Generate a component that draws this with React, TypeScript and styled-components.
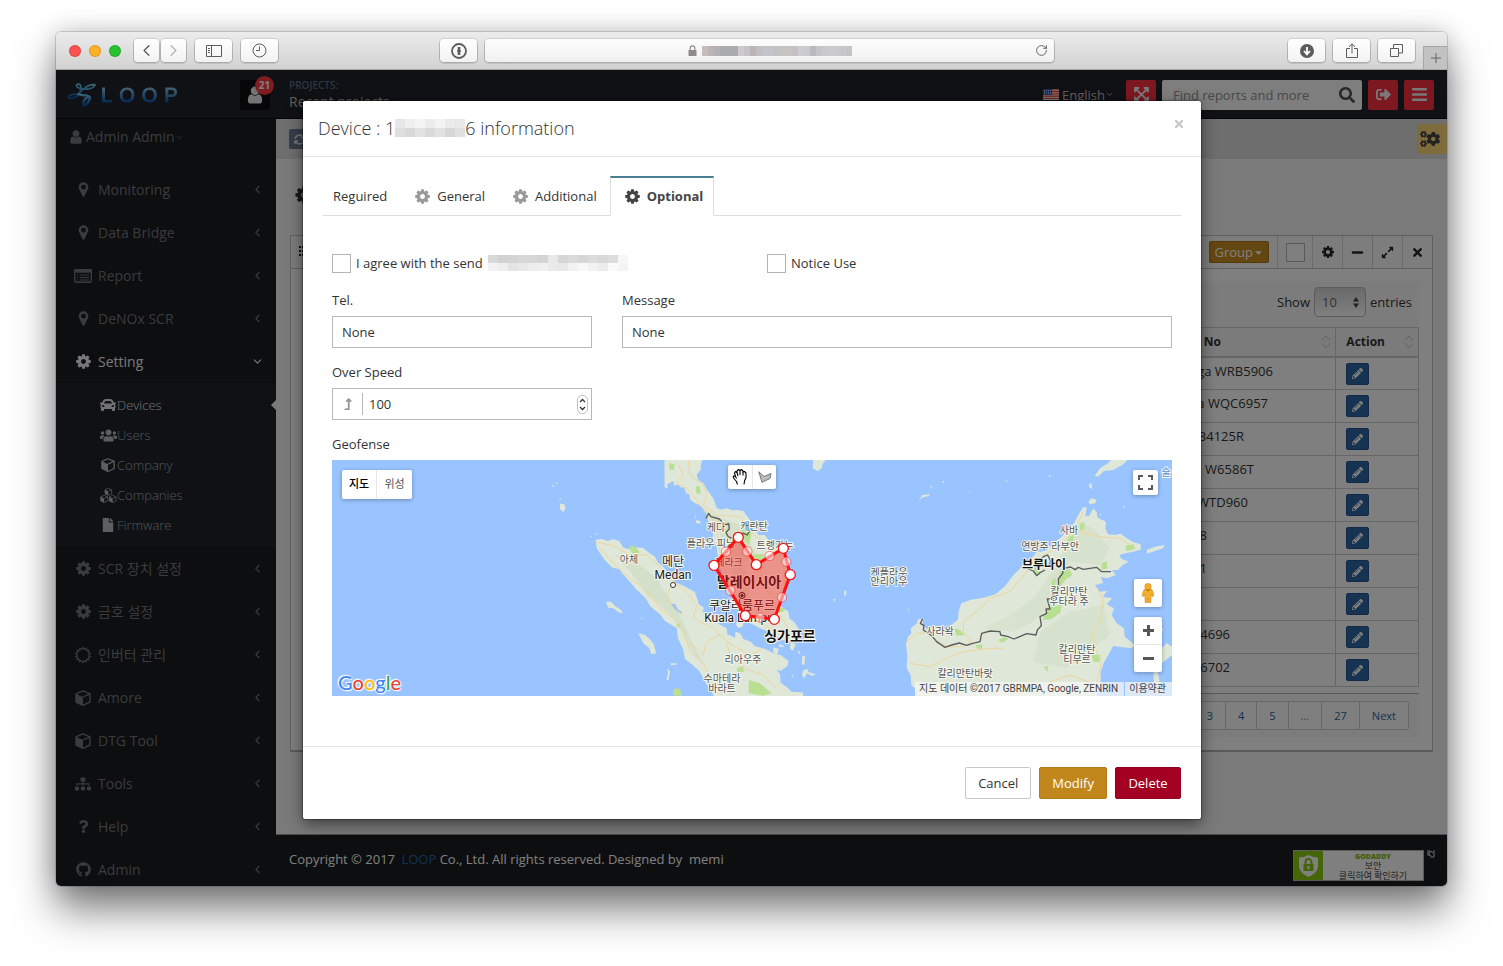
import React from "react";
import styled, { createGlobalStyle, css } from "styled-components";
import {
  FaBars, FaCar, FaCaretDown, FaCogs, FaExpandAlt, FaExpandArrowsAlt, FaFile, FaGithub,
  FaLevelUpAlt, FaMinus, FaPencilAlt, FaQuestion, FaSearch, FaSignOutAlt, FaSitemap,
  FaSyncAlt, FaTimes, FaUsers,
} from "react-icons/fa";
import { ChevronDown, ChevronLeft, ChevronRight, Clock3, Plus, RotateCw } from "lucide-react";

const GlobalStyle = createGlobalStyle`
  *, *::before, *::after { box-sizing: border-box; }
  body { margin: 0; background: #fff; font: 13px/20px "Open Sans", "Noto Sans CJK KR", sans-serif; color: #333; }
  button, input, select { font: inherit; color: inherit; margin: 0; }
  button { padding: 0; border: 0; background: none; cursor: pointer; }
  a { color: inherit; text-decoration: none; }
`;

/* ---------- icons ---------- */

const paths = {
  cog: "M1152 896q0-106-75-181t-181-75-181 75-75 181 75 181 181 75 181-75 75-181zm512-109v222q0 12-8 23t-20 13l-185 28q-19 54-39 91 35 50 107 138 10 12 10 25t-9 23q-27 37-99 108t-94 71q-12 0-26-9l-138-108q-44 23-91 38-16 136-29 186-7 28-36 28h-222q-14 0-24.5-8.5t-11.5-21.5l-28-184q-49-16-90-37l-141 107q-10 9-25 9-14 0-25-11-126-114-165-168-7-10-7-23 0-12 8-23 15-21 51-66.5t54-70.5q-27-50-41-99l-183-27q-13-2-21-12.5t-8-23.5v-222q0-12 8-23t19-13l186-28q14-46 39-92-40-57-107-138-10-12-10-24 0-10 9-23 26-36 98.5-107.5t94.5-71.5q13 0 26 10l138 107q44-23 91-38 16-136 29-186 7-28 36-28h222q14 0 24.5 8.5t11.5 21.5l28 184q49 16 90 37l142-107q9-9 24-9 13 0 25 10 129 119 165 170 7 8 7 22 0 12-8 23-15 21-51 66.5t-54 70.5q26 50 41 98l183 28q13 2 21 12.5t8 23.5z",
  marker: "M1152 640q0-106-75-181t-181-75-181 75-75 181 75 181 181 75 181-75 75-181zm256 0q0 109-33 179l-364 774q-16 33-47.5 52t-67.5 19-67.5-19-46.5-52l-365-774q-33-70-33-179 0-212 150-362t362-150 362 150 150 362z",
  user: "M1536 1399q0 109-62.5 187t-150.5 78h-854q-88 0-150.5-78t-62.5-187q0-85 8.5-160.5t31.5-152 58.5-131 94-89 134.5-34.5q131 128 313 128t313-128q76 0 134.5 34.5t94 89 58.5 131 31.5 152 8.5 160.5zm-256-887q0 159-112.5 271.5t-271.5 112.5-271.5-112.5-112.5-271.5 112.5-271.5 271.5-112.5 271.5 112.5 112.5 271.5z",
};

const Glyph = ({ name, size }: { name: keyof typeof paths; size: number }) => (
  <svg width={size} height={size} viewBox="0 0 1792 1792" fill="currentColor" aria-hidden="true">
    <path d={paths[name]} />
  </svg>
);

const ReportIcon = () => (
  <svg width="18" height="14" viewBox="0 0 18 14" aria-hidden="true">
    <rect x="0.7" y="0.7" width="16.6" height="12.6" rx="1.5" fill="none" stroke="currentColor" strokeWidth="1.4" />
    <path d="M0 3.8V1.5Q0 0 1.5 0h15Q18 0 18 1.500v2.300z" fill="currentColor" />
    <path d="M3 6h1M5.500 6H15M3 8.500h1M5.500 8.500H15M3 11h1M5.500 11H15" stroke="currentColor" strokeWidth="1" />
  </svg>
);

const SunIcon = () => {
  const teeth = Array.from({ length: 14 }, (_, i) => {
    const at = (a: number, r: number) => `${9 + r * Math.sin(a)} ${9 - r * Math.cos(a)}`;
    const a = (i * Math.PI) / 7;
    return `M${at(a - 0.17, 6.8)}L${at(a, 8.7)}L${at(a + 0.17, 6.8)}z`;
  }).join("");
  return (
    <svg width="18" height="18" viewBox="0 0 18 18" aria-hidden="true">
      <circle cx="9" cy="9" r="6.3" fill="none" stroke="currentColor" strokeWidth="1.300" />
      <path d={teeth} fill="currentColor" />
    </svg>
  );
};

const cubeShape = (
  <>
    <path d="M8 0.800 15 3.800V12L8 15.400 1 12V3.800z" fill="none" stroke="currentColor" strokeWidth="1.400" strokeLinejoin="round" />
    <path d="M1 3.800 8 7v8.400L1 12z" fill="currentColor" />
    <path d="M8 7l7-3.200" stroke="currentColor" strokeWidth="1.300" />
  </>
);
const CubeIcon = ({ size = 16 }: { size?: number }) => (
  <svg width={size} height={size} viewBox="0 0 16 16" aria-hidden="true">{cubeShape}</svg>
);
const CubesIcon = () => (
  <svg width="17" height="15" viewBox="0 0 34 30" aria-hidden="true">
    <g transform="translate(9 0) scale(0.95)">{cubeShape}</g>
    <g transform="translate(0.500 14) scale(0.980)">{cubeShape}</g>
    <g transform="translate(17.500 14) scale(0.980)">{cubeShape}</g>
  </svg>
);

const LoopMark = () => (
  <svg width="29" height="25" viewBox="0 0 87 75" fill="none" aria-hidden="true">
    <defs>
      <linearGradient id="mark" x1="0" y1="0" x2="0" y2="1">
        <stop offset="0" stopColor="#70ccec" />
        <stop offset="1" stopColor="#0a50b0" />
      </linearGradient>
    </defs>
    <g stroke="url(#mark)" strokeWidth="5" strokeLinecap="round" strokeLinejoin="round">
      <path d="M36 36C46 22 60 6 84 8C80 20 62 24 42 20C28 18 24 9 34 6C46 7 42 24 36 36C28 48 12 51 4 47C6 37 20 35 34 38" />
      <path d="M34 36C44 43 66 37 69 46C69 56 59 69 51 70C45 61 52 50 62 46" strokeWidth="7" />
    </g>
  </svg>
);

const LockIcon = () => (
  <svg width="9" height="11" viewBox="0 0 9 11" aria-hidden="true">
    <rect x="0.500" y="5" width="8" height="6" rx="0.600" fill="#8c8c8c" />
    <path d="M2.200 5V3.200a2.300 2.300 0 0 1 4.600 0V5" fill="none" stroke="#8c8c8c" strokeWidth="1.200" />
  </svg>
);

const FlagIcon = () => (
  <svg width="16" height="11" viewBox="0 0 16 11" aria-hidden="true">
    <rect width="16" height="11" fill="#fff" />
    <path d="M0 .8h16M0 2.500h16M0 4.200h16M0 6h16M0 7.700h16M0 9.500h16" stroke="#e8423a" strokeWidth="1" />
    <rect width="9" height="6" fill="#2c57c8" />
    <path d="M1 1.500h7M1 3.200h7M1 4.800h7" stroke="#fff" strokeWidth=".7" strokeDasharray="1 1" />
  </svg>
);

const Mosaic = ({ cols, cell, rows, height }: { cols: number; cell: number; rows: string[][]; height: number }) => (
  <svg width={cols * cell} height={height} aria-hidden="true">
    {rows.map((row, y) =>
      row.map((fill, x) => (
        <rect key={`${y}-${x}`} x={x * cell} y={(y * height) / rows.length} width={cell} height={height / rows.length} fill={fill} />
      ))
    )}
  </svg>
);

/* ---------- browser window ---------- */

const Desktop = styled.div`
  min-height: 100vh;
  padding: 32px 56px 80px;
  overflow: hidden;
`;
const Window = styled.div`
  display: flex;
  flex-direction: column;
  height: calc(100vh - 112px);
  min-height: 800px;
  border-radius: 5px;
  overflow: hidden;
  box-shadow: 0 0 0 1px rgba(0, 0, 0, 0.14), 0 0 24px rgba(0, 0, 0, 0.2), 0 24px 40px rgba(0, 0, 0, 0.5);
`;
const Chrome = styled.header`
  display: flex;
  align-items: center;
  height: 38px;
  flex: none;
  padding-left: 13px;
  background: linear-gradient(#ebebeb, #d2d2d2);
  border-bottom: 1px solid #a8a8a8;
  color: #636363;
`;
const Lights = styled.div`
  display: flex;
  gap: 8px;
  margin-right: 13px;
`;
const Light = styled.span<{ $color: string }>`
  width: 12px;
  height: 12px;
  border-radius: 50%;
  background: ${(p) => p.$color};
  box-shadow: inset 0 0 0 1px rgba(0, 0, 0, 0.12);
`;
const ChromeButton = styled.button<{ $narrow?: boolean; $muted?: boolean }>`
  display: flex;
  align-items: center;
  justify-content: center;
  width: ${(p) => (p.$narrow ? 25 : 37)}px;
  height: 23px;
  border-radius: 4px;
  background: linear-gradient(#fff, #f2f2f2);
  box-shadow: 0 0 0 1px rgba(0, 0, 0, 0.1), 0 1px 0 1px rgba(0, 0, 0, 0.1);
  color: ${(p) => (p.$muted ? "#b4b4b4" : "#5c5c5c")};
`;
const ChromeGroup = styled.div<{ $gap: number }>`
  display: flex;
  gap: ${(p) => p.$gap}px;
`;
const AddressGroup = styled.div`
  display: flex;
  flex: 1;
  gap: 8px;
  margin: 0 234px 0 162px;
`;
const Address = styled.div`
  display: flex;
  flex: 1;
  align-items: center;
  justify-content: center;
  gap: 4px;
  height: 23px;
  padding: 0 6px 0 23px;
  border-radius: 4px;
  background: linear-gradient(#fdfdfd, #f0f0f0);
  box-shadow: 0 0 0 1px rgba(0, 0, 0, 0.1), 0 1px 0 1px rgba(0, 0, 0, 0.1);
`;
const AddressText = styled.div`
  display: flex;
  flex: 1;
  align-items: center;
  justify-content: center;
  gap: 5px;
  color: #999;
`;
const NewTab = styled.button`
  align-self: flex-end;
  display: flex;
  align-items: center;
  justify-content: center;
  width: 24px;
  height: 23px;
  margin-left: 8px;
  border: 1px solid #a5a5a5;
  border-width: 1px 0 0 1px;
  background: #c2c2c2;
`;

/* ---------- application ---------- */

const AppArea = styled.div`
  position: relative;
  display: flex;
  flex-direction: column;
  flex: 1;
  min-height: 0;
  background: #f4f4f4;
`;
const TopBar = styled.div`
  display: flex;
  align-items: center;
  height: 49px;
  flex: none;
  padding: 1px 13px 0 0;
  background: #20222a;
  border-bottom: 1px solid #0c0d10;
  color: #c0bbb7;
`;
const Brand = styled.div`
  display: flex;
  align-items: center;
  width: 220px;
  padding: 0 6px 0 11px;
`;
const BrandName = styled.div`
  display: flex;
  gap: 7px;
  flex: 1;
  margin-left: 5px;
  font: 20px/24px "Liberation Sans", Arial, sans-serif;
  span {
    background: linear-gradient(#8cc8e8 20%, #0a58b0 80%);
    background-clip: text;
    color: transparent;
    -webkit-text-stroke: 1px transparent;
  }
`;
const Activity = styled.button`
  position: relative;
  display: flex;
  align-items: center;
  justify-content: center;
  width: 30px;
  height: 30px;
  border-radius: 2px;
  background: #0e0f12;
  color: #e8e8e8;
`;
const Badge = styled.span`
  position: absolute;
  top: -4px;
  right: -4px;
  width: 19px;
  height: 19px;
  border-radius: 50%;
  background: #ff3844;
  color: #fff;
  font: bold 10px/19px "Open Sans", sans-serif;
`;
const Projects = styled.div`
  flex: 1;
  margin-left: 13px;
  font-size: 14px;
  line-height: 20px;
`;
const ProjectsLabel = styled.div`
  font-size: 10px;
  font-weight: 600;
  line-height: 14px;
  color: #5a6c82;
`;
const InlineButton = styled.button`
  display: flex;
  align-items: center;
`;
const TopTools = styled.div`
  display: flex;
  align-items: center;
  gap: 6px;
`;
const Language = styled.button`
  display: flex;
  align-items: center;
  gap: 3px;
  margin-right: 6px;
  span { display: flex; align-items: center; }
`;
const RedButton = styled.button`
  display: flex;
  align-items: center;
  justify-content: center;
  width: 30px;
  height: 30px;
  border-radius: 2px;
  background: #fa3040;
  color: #f4f0f0;
  font-size: 15px;
`;
const Search = styled.label`
  display: flex;
  align-items: center;
  width: 200px;
  height: 30px;
  padding: 0 7px 0 11px;
  border-radius: 2px;
  background: #fdfdfd;
  color: #505050;
  input {
    flex: 1;
    min-width: 0;
    padding: 0;
    border: 0;
    outline: 0;
    background: none;
  }
  input::placeholder { color: #909090; opacity: 1; }
`;

const Body = styled.div`
  display: flex;
  flex: 1;
  min-height: 0;
`;
const Sidebar = styled.aside`
  width: 220px;
  flex: none;
  overflow: hidden;
  background: #1a1c1e;
  color: #74767f;
  font-size: 14px;
`;
const UserLink = styled.button`
  display: flex;
  align-items: center;
  gap: 2px;
  height: 36px;
  margin: 0 0 13px 12px;
`;
const UserName = styled.span`
  display: flex;
  align-items: center;
`;
const MenuLink = styled.a<{ $active?: boolean }>`
  display: grid;
  grid-template-columns: 28px 1fr 14px;
  align-items: center;
  height: 43px;
  padding: 0 11px 0 13px;
  color: ${(p) => (p.$active ? "#f0f0f0" : "inherit")};
  column-gap: 1px;
  > :first-child { justify-self: center; }
`;
const SubMenu = styled.div`
  padding: 7px 0;
  background: #20222a;
`;
const SubLink = styled.a<{ $active?: boolean }>`
  position: relative;
  display: grid;
  grid-template-columns: 18px 1fr;
  align-items: center;
  height: 30px;
  padding-left: 43px;
  font-size: 13px;
  font-weight: 300;
  color: #a4acb0;
  svg { justify-self: center; color: ${(p) => (p.$active ? "#e4e4e4" : "#b8bec4")}; }
  ${(p) => p.$active && css`
    color: #e0e0e0;
    &::after {
      content: "";
      position: absolute;
      right: 0;
      top: 10px;
      border: 5px solid transparent;
      border-left: 0;
      border-right-color: #f4f4f4;
    }
  `}
`;

const Main = styled.main`
  display: flex;
  flex-direction: column;
  flex: 1;
  min-width: 0;
`;
const Ribbon = styled.div`
  display: flex;
  align-items: center;
  justify-content: space-between;
  height: 40px;
  flex: none;
  padding-left: 13px;
  background: #dcdcdc;
`;
const RefreshButton = styled.button`
  display: flex;
  align-items: center;
  justify-content: center;
  width: 20px;
  height: 20px;
  border-radius: 2px;
  background: #6c7a90;
  color: #e8e8e8;
`;
const SettingsTab = styled.button`
  display: flex;
  align-items: center;
  justify-content: center;
  width: 30px;
  height: 30px;
  padding-right: 4px;
  border-radius: 5px 0 0 5px;
  background: #ffd878;
  color: #444;
  font-size: 20px;
`;
const PageHead = styled.div`
  height: 76px;
  padding: 26px 0 0 18px;
  color: #333;
`;
const Panel = styled.section`
  margin: 0 14px;
  border: 1px solid #c0c0c0;
  border-bottom: 2px solid #b4b4b4;
  background: #fff;
`;
const PanelHead = styled.div`
  display: flex;
  align-items: center;
  justify-content: flex-end;
  height: 33px;
  padding-left: 8px;
  background: #fafafa;
  border-bottom: 1px solid #c0c0c0;
`;
const Grip = styled.span`
  width: 10px;
  height: 12px;
  margin-right: auto;
  background: repeating-linear-gradient(90deg, transparent 0 2px, #fafafa 2px 3px), repeating-linear-gradient(#222 0 2px, transparent 2px 4px);
`;
const GroupButton = styled.button`
  display: flex;
  align-items: center;
  height: 22px;
  margin-right: 8px;
  padding: 0 4px;
  border: 1px solid #a87414;
  border-radius: 2px;
  background: #c88c20;
  color: #fff;
  font-size: 13px;
`;
const PanelCell = styled.div<{ $wide?: boolean }>`
  display: flex;
  align-items: center;
  justify-content: center;
  width: ${(p) => (p.$wide ? 35 : 30)}px;
  height: 32px;
  border-left: 1px solid #d6d6d6;
  color: #282828;
  font-size: 13px;
  button { display: flex; }
`;
const CheckBox = styled.input`
  appearance: none;
  width: 19px;
  height: 19px;
  flex: none;
  border: 1px solid #b4b4b4;
  background: #fff;
`;
const PanelBody = styled.div`
  padding: 13px 13px 12px;
`;
const LengthBar = styled.div`
  display: flex;
  align-items: center;
  justify-content: flex-end;
  height: 45px;
  padding: 0 7px 5px 0;
  background: #f8f8f8;
`;
const LengthLabel = styled.label`
  display: flex;
  align-items: center;
  gap: 4px;
`;
const SelectWrap = styled.span`
  display: flex;
  align-items: center;
  width: 52px;
  height: 30px;
  border: 1px solid #b8b8b8;
  border-radius: 4px;
  background: linear-gradient(#d4d4d4, #fff);
  color: #666;
  select {
    appearance: none;
    width: 50px;
    height: 28px;
    padding-left: 7px;
    margin-right: -12px;
    border: 0;
    background: none;
  }
`;
const Table = styled.table`
  width: 100%;
  border-collapse: collapse;
  border: 1px solid #ccc;
  th { height: 29px; padding: 0 0 0 10px; border: 1px solid #ccc; background: #f6f6f6; font-size: 12px; text-align: left; color: #333; border-bottom-width: 2px; }
  td { height: 33px; padding: 3px 0 4px 10px; border: 1px solid #ccc; line-height: 20px; vertical-align: top; }
`;
const ThInner = styled.span`
  display: flex;
  align-items: center;
  justify-content: flex-end;
  padding-right: 4px;
`;
const HeadText = styled.span<{ $tail: number }>`
  margin-right: ${(p) => p.$tail}px;
`;
const PlateCell = styled.td<{ $tail: number }>`
  && {
    padding-right: ${(p) => p.$tail}px;
    text-align: right;
  }
`;
const ActionCell = styled.td`
  && { width: 83px; padding-top: 5px; }
`;
const EditButton = styled.button`
  display: flex;
  align-items: center;
  justify-content: center;
  width: 23px;
  height: 22px;
  border: 1px solid #24558e;
  border-radius: 2px;
  background: #2c66a4;
  color: #fff;
  font-size: 11px;
`;
const Pager = styled.nav`
  display: flex;
  justify-content: flex-end;
  height: 45px;
  margin-top: 6px;
  padding: 7px 10px 0 0;
  background: #f8f8f8;
  border-top: 1px solid #b4b4b4;
`;
const PageButton = styled.button<{ $muted?: boolean }>`
  height: 29px;
  margin-left: -1px;
  padding: 0 12px;
  border: 1px solid #d0d0d0;
  background: #fff;
  color: ${(p) => (p.$muted ? "#888" : "#2a64a0")};
  font-size: 11px;
  &:last-child { border-radius: 0 2px 2px 0; }
`;
const Footer = styled.footer`
  display: flex;
  justify-content: space-between;
  height: 52px;
  flex: none;
  margin-top: auto;
  padding: 15px 12px 0 13px;
  border-top: 1px solid #999;
  background: #1a1c1e;
  color: #fff;
  line-height: 18px;
`;
const CompanyLink = styled.a`
  margin-left: 3px;
  color: #2a64a0;
`;
const Seal = styled.a`
  display: flex;
  width: 131px;
  height: 31px;
  border: 1px solid #b8b8b8;
  background: #fff;
`;
const SealSide = styled.span`
  display: flex;
  align-items: center;
  justify-content: center;
  width: 29px;
  background: #88cc10;
`;
const SealText = styled.span`
  flex: 1;
  padding-top: 1px;
  text-align: center;
  font: 9px/10px "Noto Sans CJK KR", sans-serif;
  color: #444;
  white-space: nowrap;
`;
const SealName = styled.strong`
  display: block;
  font: 800 7px/9px "Open Sans", sans-serif;
  color: #80b810;
`;
const SealLine = styled.span`
  display: block;
`;
const SealRow = styled.div`
  display: flex;
  gap: 2px;
`;

/* ---------- dialog ---------- */

const Backdrop = styled.div`
  position: absolute;
  inset: 0;
  padding: 31px 20px 0 21px;
  background: rgba(0, 0, 0, 0.5);
`;
const Dialog = styled.div`
  max-width: 898px;
  margin: 0 auto;
  border-radius: 2px;
  background: #fff;
  box-shadow: 0 5px 15px rgba(0, 0, 0, 0.5), 0 0 1px 1px rgba(0, 0, 0, 0.3);
`;
const DialogHead = styled.div`
  display: flex;
  align-items: center;
  justify-content: space-between;
  height: 56px;
  padding: 0 16px 2px 15px;
  border-bottom: 1px solid #e3e3e3;
`;
const DialogTitle = styled.h4`
  display: flex;
  align-items: center;
  margin: 0;
  font-size: 18px;
  font-weight: 300;
  line-height: 24px;
`;
const CloseButton = styled.button`
  display: flex;
  padding-bottom: 8px;
  color: #c8c8c8;
  font-size: 12px;
`;
const DialogBody = styled.div`
  padding: 19px 20px 50px;
`;
const Tabs = styled.div`
  display: flex;
  gap: 2px;
  height: 40px;
  border-bottom: 1px solid #ddd;
`;
const Tab = styled.button<{ $active?: boolean }>`
  display: flex;
  align-items: center;
  gap: 6px;
  height: 40px;
  padding: 0 10px 1px 9px;
  border: 1px solid transparent;
  border-top-width: 2px;
  svg { margin-left: 4px; color: #999; }
  ${(p) => p.$active && css`
    border-color: #4c7b94 #ddd transparent;
    background: #fff;
    color: #444;
    font-weight: bold;
    svg { color: #444; }
  `}
`;
const Form = styled.form`
  display: grid;
  grid-template-columns: repeat(12, minmax(0, 1fr));
  gap: 14px 30px;
  padding: 34px 9px 0;
`;
const Cell = styled.div<{ $span: number }>`
  grid-column: span ${(p) => p.$span};
`;
const CheckLabel = styled.label`
  display: flex;
  align-items: center;
  gap: 5px;
  height: 26px;
`;
const FieldLabel = styled.label`
  display: block;
  margin-bottom: 6px;
`;
const TextInput = styled.input`
  display: block;
  width: 100%;
  height: 32px;
  padding: 0 9px;
  border: 1px solid #b8b8b8;
  border-radius: 0;
  background: #fff;
`;
const NumberBox = styled.div`
  display: flex;
  align-items: center;
  height: 32px;
  padding-right: 3px;
  border: 1px solid #b8b8b8;
  input {
    appearance: textfield;
    flex: 1;
    min-width: 0;
    height: 22px;
    padding: 0 6px;
    border: 0;
    border-left: 1px solid #b8b8b8;
    outline: 0;
  }
  input::-webkit-inner-spin-button { display: none; }
`;
const NumberIcon = styled.span`
  display: flex;
  justify-content: center;
  width: 29px;
  color: #999;
  font-size: 12px;
`;
const Stepper = styled.button`
  display: flex;
  width: 11px;
  height: 19px;
  border: 1px solid #c0c0c0;
  border-radius: 5px;
`;
const DialogFoot = styled.div`
  display: flex;
  justify-content: flex-end;
  gap: 8px;
  padding: 20px;
  border-top: 1px solid #e3e3e3;
`;
const tones = {
  plain: css`border-color: #c8c8c8; background: #fff; color: #333;`,
  gold: css`border-color: #b47a16; background: #c1871d; color: #fff;`,
  red: css`border-color: #900022; background: #a30024; color: #fff;`,
};
const ActionButton = styled.button<{ $tone: keyof typeof tones }>`
  min-width: 66px;
  height: 32px;
  padding: 0 12px;
  border: 1px solid;
  border-radius: 2px;
  ${(p) => tones[p.$tone]}
`;

/* ---------- map ---------- */

const MapBox = styled.div`
  position: relative;
  height: 236px;
  overflow: hidden;
  background: #99c4ff;
  font-family: Roboto, "Noto Sans CJK KR", sans-serif;
`;
const MapDrawing = styled.svg`
  display: block;
  width: 100%;
  height: 236px;
`;
const MapControls = styled.div<{ $place: "type" | "draw" | "full" | "pegman" | "zoom" }>`
  position: absolute;
  display: flex;
  border-radius: 2px;
  background: #fff;
  box-shadow: 0 1px 4px rgba(0, 0, 0, 0.3);
  ${(p) => ({
    type: css`left: 10px; top: 10px;`,
    draw: css`left: calc(50% - 24px); top: 5px;`,
    full: css`right: 14px; top: 10px;`,
    pegman: css`right: 10px; bottom: 89px;`,
    zoom: css`right: 10px; bottom: 24px; flex-direction: column;`,
  }[p.$place])}
`;
const MapButton = styled.button<{ $w: number; $h: number; $on?: boolean; $rule?: "left" | "top" }>`
  display: flex;
  align-items: center;
  justify-content: center;
  width: ${(p) => p.$w}px;
  height: ${(p) => p.$h}px;
  font-size: 11px;
  font-weight: ${(p) => (p.$on ? 500 : 400)};
  color: ${(p) => (p.$on ? "#000" : "#565656")};
  ${(p) => p.$rule && css`border-${p.$rule}: 1px solid #e8e8e8;`}
`;
const Attribution = styled.div`
  position: absolute;
  right: 0;
  bottom: 0;
  display: flex;
  font-size: 10px;
  line-height: 14px;
  color: #444;
  background: rgba(245, 245, 245, 0.75);
  > * { padding: 0 6px 0 4px; }
  a { border-left: 1px solid #99c4ff; }
`;
const GoogleMark = styled.a`
  position: absolute;
  left: 6px;
  bottom: 0;
  font: 500 20px/28px Lato, Roboto, sans-serif;
  text-shadow: 0 0 2px #fff, 0 0 2px #fff, 1px 1px 1px #fff, -1px -1px 1px #fff;
`;
const Letter = styled.span<{ $color: string }>`
  color: ${(p) => p.$color};
`;

type Label = { x: number; y: number; text: string; size?: number; bold?: boolean; color?: string };
const mapLabels: Label[] = [
  { x: 297, y: 103, text: "아체" },
  { x: 341, y: 106, text: "메단", size: 12, color: "#222" },
  { x: 341, y: 119, text: "Medan", size: 12, color: "#222" },
  { x: 384, y: 71, text: "케다" },
  { x: 422, y: 70, text: "캐란탄" },
  { x: 379, y: 87, text: "플라우 피낭" },
  { x: 443, y: 89, text: "트렝가누" },
  { x: 397, y: 106, text: "페라크" },
  { x: 417, y: 127, text: "말레이시아", size: 14, bold: true, color: "#222" },
  { x: 410, y: 150, text: "쿠알라룸푸르", size: 12, color: "#222" },
  { x: 409, y: 162, text: "Kuala Lumpur", size: 12, color: "#222" },
  { x: 458, y: 181, text: "싱가포르", size: 14, bold: true, color: "#111" },
  { x: 411, y: 203, text: "리아우주" },
  { x: 390, y: 222, text: "수마테라" },
  { x: 390, y: 232, text: "바라트" },
  { x: 557, y: 116, text: "케플라우" },
  { x: 557, y: 125, text: "안리아우" },
  { x: 737, y: 74, text: "사바" },
  { x: 718, y: 90, text: "연방주 라부안" },
  { x: 712, y: 109, text: "브루나이", size: 12, bold: true, color: "#111" },
  { x: 737, y: 135, text: "칼리만탄" },
  { x: 737, y: 145, text: "우타라 주" },
  { x: 608, y: 175, text: "사라왁" },
  { x: 745, y: 193, text: "칼리만탄" },
  { x: 745, y: 203, text: "티무르" },
  { x: 633, y: 217, text: "칼리만탄바랏" },
  { x: 834, y: 16, text: "술", color: "#5a8fd8" },
];

const corners = [[235, 247], [289, 329], [370, 280], [391, 359], [343, 493], [256, 482], [162, 331]];
const middles = [[262, 289], [329, 303], [379, 320], [366, 427], [300, 488], [211, 407], [198, 290]];

const GeoMap = () => (
  <MapDrawing viewBox="0 0 840 236" preserveAspectRatio="xMidYMid slice" role="img" aria-label="Geofence map">
    <rect width="840" height="236" fill="#99c4ff" />
    <g transform="translate(-2 -5) scale(0.33333)" strokeLinejoin="round">
      <g fill="#dfe7d8">
        <path d="M797 255L815 252 833 258 850 252 868 259 880 278 897 283 912 277 940 279 958 294 975 305 983 322 1000 335 1012 352 1030 362 1035 382 1060 392 1078 402 1094 410 1102 432 1106 448 1122 458 1118 470 1138 481 1160 488 1163 505 1190 520 1192 537 1215 548 1216 530 1231 535 1240 552 1262 560 1275 574 1300 580 1318 588 1332 596 1352 600 1376 619 1372 634 1352 647 1340 645 1350 658 1352 683 1370 696 1385 710 1418 712 1420 725 1152 725 1140 700 1130 688 1108 648 1088 630 1065 612 1060 585 1044 550 1040 520 1028 512 1005 498 990 478 962 455 947 430 920 404 900 380 876 354 868 343 845 337 822 312 800 280z" />
        <path d="M1003 12L1004 96 1012 102 1012 88 1030 78 1033 92 1043 88 1054 98 1062 97 1068 115 1078 118 1080 132 1090 142 1108 151 1118 160 1130 178 1133 195 1144 210 1150 230 1148 250 1160 275 1162 296 1168 310 1170 340 1180 362 1193 392 1197 410 1205 425 1207 450 1228 465 1243 488 1260 504 1284 517 1305 526 1330 540 1355 555 1378 558 1388 553 1407 547 1405 520 1395 503 1378 490 1375 470 1354 455 1358 430 1360 400 1376 360 1371 345 1370 302 1360 285 1338 268 1318 258 1304 240 1285 240 1270 214 1256 190 1240 168 1222 165 1205 166 1190 160 1172 164 1160 158 1150 130 1130 103 1120 85 1105 75 1100 60 1113 42 1112 30 1118 12z" />
        <path d="M925 535L945 540 962 555 972 568 978 595 964 598 958 580 940 565zM828 440L843 440 858 455 870 462 880 474 868 473 850 460 835 458zM690 146L703 148 707 160 700 172 690 163zM688 130L693 129 690 138zM664 93L670 90 674 96zM676 79L682 86 680 90zM1012 638L1020 650 1016 674 1009 675 1014 655zM1022 625L1040 625 1040 629 1022 630zM932 487L938 490 935 494zM1096 178L1099 192 1096 190zM1098 196L1112 198 1110 206 1098 203zM795 235L803 237 800 241zM780 242L787 244 783 247z" />
        <path d="M1450 12L1490 12 1478 26 1475 40 1463 48 1448 40zM1382 562L1398 568 1388 588 1380 580zM1330 577L1347 582 1340 600 1330 592zM1416 606L1426 600 1423 630 1416 628zM1420 646L1432 642 1436 652 1457 658 1446 663 1432 655 1422 670 1416 660zM1385 660L1390 662 1386 670zM1406 585L1412 598 1404 594zM1347 568L1362 572 1360 577 1347 575z" />
      </g>
      <g fill="#cbd9bc" opacity=".45">
        <path d="M855 300L890 300 930 330 980 370 1010 420 1060 500 1090 570 1130 640 1100 610 1070 560 1040 500 990 450 950 420 900 350z" />
        <path d="M1115 165L1160 215 1190 290 1220 390 1250 450 1260 400 1240 320 1280 300 1230 210z" />
      </g>
      <g fill="#b9df92">
        <path d="M1018 25L1034 28 1032 44 1018 44zM1097 92L1110 95 1112 118 1098 114zM895 276L910 272 922 282 930 294 908 297zM1030 705L1040 698 1052 706 1055 722 1030 722zM1220 640L1240 634 1242 650 1222 652zM1236 225L1262 210 1264 240 1258 270 1245 260zM1260 300L1300 296 1305 315 1265 330zM1335 455L1362 460 1365 468 1340 475zM1256 675L1290 685 1325 715 1300 722 1256 715zM1040 505L1050 508 1052 520 1040 515z" />
      </g>
      <path d="M1022 445L1036 448 1045 465 1057 470 1052 477 1040 470 1030 460z" fill="#99c4ff" />
      <path d="M1220 495L1243 498 1240 515 1225 522 1216 510z" fill="#e6ecdf" stroke="#99c4ff" strokeWidth="4" />
      <g fill="none" stroke="#edd59c" strokeWidth="3">
        <path d="M800 262L850 272 900 300 950 300 985 330 1030 380 1070 410 1100 450 1090 490 1150 520 1190 560 1200 600 1240 640 1300 660 1340 700" />
        <path d="M805 275L850 325 900 370 950 405 990 460 1030 490 1060 530 1080 590 1120 625 1150 690" />
        <path d="M1030 380L1010 420 1030 460 1060 480M1080 560L1120 600 1130 560 1170 540M1190 560L1260 600 1300 580" />
        <path d="M1040 20L1060 60 1040 80 1080 110 1110 150 1150 190 1165 250 1170 300 1190 360 1215 430 1250 480 1320 520 1370 540" />
        <path d="M1075 20L1080 60 1120 90 1130 120 1120 150 1160 180 1230 185 1260 230 1300 260 1340 285 1360 310 1365 400 1345 470 1375 520M1150 190L1200 240 1250 280 1290 330 1300 400 1340 430" />
      </g>
      <path d="M1128 190L1136 175 1143 185 1168 192 1185 210 1196 206 1198 222 1188 232 1195 246 1208 250 1220 234 1240 235 1252 240 1262 222 1270 212" fill="none" stroke="#5c5c5c" strokeWidth="4" />
    </g>
    <g transform="translate(418 -5) scale(0.33333)" strokeLinejoin="round">
      <g fill="#dfe7d8">
        <path d="M468 568L474 545 484 535 482 520 500 506 505 492 520 494 518 508 530 522 555 516 576 526 600 512 624 494 626 468 634 445 663 434 700 428 736 418 765 394 790 360 815 336 820 318 843 312 860 290 885 290 905 270 935 245 952 222 970 208 985 180 998 158 1010 156 1006 184 1018 182 1030 160 1040 172 1043 188 1068 200 1066 220 1074 238 1095 240 1112 236 1130 250 1150 262 1172 268 1172 284 1150 290 1130 294 1108 300 1115 312 1136 320 1118 330 1104 345 1085 345 1098 360 1072 370 1052 366 1060 384 1035 390 1048 410 1072 408 1058 425 1086 430 1070 448 1092 460 1085 480 1100 505 1122 520 1124 545 1155 570 1145 580 1112 576 1090 572 1075 600 1062 622 1052 650 1052 680 1040 725 500 725 494 700 484 690 482 660 470 640 472 605z" />
        <path d="M1135 12L1120 28 1090 45 1062 48 1044 65 1034 62 1050 40 1075 24 1085 12zM1018 84L1026 88 1026 102 1018 98zM1015 140L1025 130 1040 134 1036 145 1020 148zM507 135L518 120 540 118 536 124 520 126zM1190 285L1215 275 1245 270 1238 280 1215 288 1192 296zM1225 590L1250 565 1266 575 1266 600 1240 620 1222 640 1230 690 1212 690 1210 640 1190 615 1215 600zM1178 602L1195 602 1195 612 1180 612zM1120 152L1126 156 1121 160zM282 408L289 406 288 424 283 422zM250 432L257 432 254 440zM575 80L584 76 580 84zM766 76L773 78 768 82zM896 60L903 63 898 68zM1228 512L1240 522 1238 528 1226 520zM540 94L548 94 543 99zM656 108L660 110 657 114zM473 460L479 464 474 467zM1050 178L1054 178 1053 184z" />
      </g>
      <g fill="#cbd9bc" opacity=".35">
        <path d="M990 200L1030 220 1080 280 1050 330 960 320 940 380 900 450 850 500 790 530 700 520 780 480 850 430 900 360z" />
        <path d="M870 530L960 470 1060 450 1080 540 1000 600 950 640 850 620z" />
      </g>
      <g fill="#b9df92">
        <path d="M958 245L972 238 970 262 955 268 950 258zM990 208L1002 200 1004 222 990 226zM1125 272L1152 268 1154 282 1130 288zM1055 325L1070 318 1072 340 1055 345zM850 338L868 335 870 358 855 360zM930 350L960 342 966 362 948 372 932 392 925 380zM905 375L918 370 915 392 905 390zM898 455L935 450 932 472 905 492 880 496 880 480zM745 555L765 545 775 552 755 564zM612 520L630 525 645 540 620 542zM678 570L697 568 696 582 680 580zM1025 598L1052 600 1048 622 1030 620zM880 635L895 632 893 650z" />
      </g>
      <g fill="none" stroke="#edd59c" strokeWidth="3">
        <path d="M470 560L500 535 540 535 560 565 600 575 640 575 665 560 640 530 640 500 680 470 720 430 780 410 830 350 870 310 930 270 970 230 1000 170" />
        <path d="M1000 230L1050 245 1110 250 1150 275M970 240L990 225 1020 245M480 625L540 635 600 605 640 590 720 580 760 580" />
        <path d="M1040 395L1060 440 1050 500 1025 540 1040 590 1055 620 1040 680M900 680L960 660 1040 690" />
      </g>
      <g fill="none" stroke="#5c5c5c" strokeWidth="4">
        <path d="M518 492L511 505 522 512 520 525 545 542 560 560 585 577 605 570 628 564 650 571 668 565 690 560 695 535 720 528 750 530 752 540 772 544 792 552 830 536 858 540 862 525 874 512 870 485 890 475 888 462 900 462 892 432 912 430 915 405 926 395 925 372 938 355 940 340 962 336 975 344 985 337 1000 343 1040 337 1055 350 1083 350" />
        <path d="M822 322L835 342 850 348 860 362 872 352 885 345M868 325L880 305 893 300 902 318 898 332" />
      </g>
    </g>
    <g
      fill="#555"
      textAnchor="middle"
      stroke="#f4f7ef"
      strokeWidth="2"
      strokeLinejoin="round"
      paintOrder="stroke"
      fontSize="10"
    >
      {mapLabels.map((l) => (
        <text key={`${l.x}-${l.y}`} x={l.x} y={l.y} fill={l.color} fontSize={l.size} fontWeight={l.bold ? 700 : 400}>
          {l.text}
        </text>
      ))}
    </g>
    <circle cx="341" cy="125" r="2.500" fill="#fff" stroke="#333" />
    <circle cx="410" cy="135.500" r="3" fill="none" stroke="#222" />
    <circle cx="410" cy="135.500" r="1.500" fill="#222" />
    <g transform="translate(328 -5) scale(0.33333)">
      <polygon points={corners.join(" ")} fill="#ff0000" fillOpacity=".36" stroke="#ff1010" strokeWidth="9" strokeLinejoin="round" />
      {middles.map(([x, y]) => (
        <circle key={`${x}-${y}`} cx={x} cy={y} r="14" fill="#fff" fillOpacity=".5" stroke="#ff1010" strokeOpacity=".5" strokeWidth="3" />
      ))}
      {corners.map(([x, y]) => (
        <circle key={`${x}-${y}`} cx={x} cy={y} r="15" fill="#fff" stroke="#f01818" strokeWidth="4" />
      ))}
    </g>
  </MapDrawing>
);

const HandIcon = () => (
  <svg width="16" height="18" viewBox="0 0 16 18" fill="#fff" stroke="#000" strokeWidth="1.100" strokeLinejoin="round" aria-hidden="true">
    <path d="M5.500 16.500L4.500 13.500 1.500 10 1.300 8 3.500 8.500 2.500 5 3.500 3.500 5 4.500 5 3 6.500 1.500 8 2.500 9.500 1.500 11 3 11 4 12.500 3.500 14 5 14 9.500 12.500 13 12 16.500" />
    <path d="M5 4.500l1 3.500M8 2.500v4.500M11 4v3.500M3.500 8.500l1 2" fill="none" />
  </svg>
);

const Pegman = () => (
  <svg width="14" height="20" viewBox="0 0 14 20" aria-hidden="true">
    <path d="M3 6.500h8l2 6-1.500 1-1.300-2.500L9.800 19.500H7.500L7 15l-.5 4.500H4.200L3.800 11l-1.300 2.500L1 12.500z" fill="#f5ae2a" stroke="#cc8410" strokeWidth=".6" />
    <circle cx="7" cy="3.600" r="3.200" fill="#f5ae2a" stroke="#cc8410" strokeWidth=".6" />
    <path d="M4.500 6.700h5L7 8.500z" fill="#b8700a" />
  </svg>
);

const SortIcon = () => (
  <svg width="10" height="14" viewBox="0 0 10 14" fill="none" stroke="#c4c4c4" aria-hidden="true">
    <path d="M1 5.500L5 1l4 4.500M1 8.500L5 13l4-4.500" />
  </svg>
);

/* ---------- content ---------- */

type Item = { label: string; icon: React.ReactNode };
const menuBefore: Item[] = [
  { label: "Monitoring", icon: <Glyph name="marker" size={17} /> },
  { label: "Data Bridge", icon: <Glyph name="marker" size={17} /> },
  { label: "Report", icon: <ReportIcon /> },
  { label: "DeNOx SCR", icon: <Glyph name="marker" size={17} /> },
];
const subItems: Item[] = [
  { label: "Devices", icon: <FaCar size={16} /> },
  { label: "Users", icon: <FaUsers size={17} /> },
  { label: "Company", icon: <CubeIcon size={14} /> },
  { label: "Companies", icon: <CubesIcon /> },
  { label: "Firmware", icon: <FaFile size={14} /> },
];
const menuAfter: Item[] = [
  { label: "SCR 장치 설정", icon: <Glyph name="cog" size={17} /> },
  { label: "금호 설정", icon: <Glyph name="cog" size={17} /> },
  { label: "인버터 관리", icon: <SunIcon /> },
  { label: "Amore", icon: <CubeIcon /> },
  { label: "DTG Tool", icon: <CubeIcon /> },
  { label: "Tools", icon: <FaSitemap size={16} /> },
  { label: "Help", icon: <FaQuestion size={13} /> },
  { label: "Admin", icon: <FaGithub size={15} /> },
];
const plates = [
  { text: "ga WRB5906", tail: 62 },
  { text: "a WQC6957", tail: 67 },
  { text: "34125R", tail: 91 },
  { text: "W6586T", tail: 81 },
  { text: "WTD960", tail: 87 },
  { text: "8", tail: 128 },
  { text: "1", tail: 128 },
  { text: "", tail: 128 },
  { text: "4696", tail: 105 },
  { text: "6702", tail: 105 },
];
const tabs = ["Reguired", "General", "Additional", "Optional"];
const pages = ["3", "4", "5", "...", "27", "Next"];

const MenuRow = ({ item }: { item: Item }) => (
  <MenuLink href="#">
    {item.icon}
    <span>{item.label}</span>
    <ChevronLeft size={13} />
  </MenuLink>
);

export default function App() {
  return (
    <Desktop>
      <GlobalStyle />
      <Window>
        <Chrome>
          <Lights>
            <Light $color="#fc5150" />
            <Light $color="#fdb225" />
            <Light $color="#27c232" />
          </Lights>
          <ChromeGroup $gap={9}>
            <ChromeGroup $gap={2}>
              <ChromeButton $narrow aria-label="Back"><ChevronLeft size={19} strokeWidth={1.700} /></ChromeButton>
              <ChromeButton $narrow $muted aria-label="Forward"><ChevronRight size={19} strokeWidth={1.700} /></ChromeButton>
            </ChromeGroup>
            <ChromeButton aria-label="Sidebar">
              <svg width="16" height="12" viewBox="0 0 16 12" fill="none" stroke="currentColor">
                <path d="M.5.5h15v11H.5zM5.500.5v11M2 3.500h2M2 5.500h2M2 7.500h2" />
              </svg>
            </ChromeButton>
            <ChromeButton aria-label="History">
              <svg width="15" height="15" viewBox="0 0 15 15" fill="none" stroke="currentColor">
                <circle cx="7.500" cy="7.500" r="6.500" />
                <path d="M7.500 3.500v4h-3.500" />
              </svg>
            </ChromeButton>
          </ChromeGroup>
          <AddressGroup>
            <ChromeButton aria-label="Passwords">
              <svg width="16" height="16" viewBox="0 0 16 16" fill="none" stroke="currentColor">
                <circle cx="8" cy="8" r="7" strokeWidth="1.800" />
                <path d="M8 4v8" strokeWidth="2.600" />
                <path d="M6.300 7l.7 1-.7 1M9.700 7L9 8l.7 1" strokeWidth=".8" />
              </svg>
            </ChromeButton>
            <Address>
              <AddressText>
                <LockIcon />
                <Mosaic cols={25} cell={6} height={10} rows={[["#c6bdb9", "#bbb3b5", "#b4b0b4", "#a9abac", "#a9abac", "#a9abad", "#cccacc", "#c4c2c6", "#bab4b4", "#c0c0c4", "#c4c4c8", "#c2c2c8", "#c2c2c4", "#c6c6c0", "#c8c4c4", "#c4c2c4", "#cdccd2", "#c9c9cf", "#bab9be", "#c4c4ca", "#c9c9cb", "#cccacc", "#cbc9c9", "#c6c6cb", "#c4c4c8"]]} />
              </AddressText>
              <RotateCw size={13} strokeWidth={1.800} />
            </Address>
          </AddressGroup>
          <ChromeGroup $gap={8}>
            <ChromeButton aria-label="Downloads">
              <svg width="14" height="14" viewBox="0 0 14 14">
                <circle cx="7" cy="7" r="7" fill="#5c5c5c" />
                <path d="M7 3v7M4 7l3 3.300L10 7" fill="none" stroke="#fff" strokeWidth="1.800" />
              </svg>
            </ChromeButton>
            <ChromeButton aria-label="Share">
              <svg width="12" height="16" viewBox="0 0 12 16" fill="none" stroke="currentColor">
                <path d="M4 5.500H.5v9h11v-9H8M6 10.500V1M3 4l3-3.300L9 4" />
              </svg>
            </ChromeButton>
            <ChromeButton aria-label="Tabs">
              <svg width="13" height="13" viewBox="0 0 13 13" fill="none" stroke="currentColor">
                <path d="M.5 4.500h8v8h-8zM3.500 4V.5h9v8.500H9" />
              </svg>
            </ChromeButton>
          </ChromeGroup>
          <NewTab aria-label="New tab"><Plus size={16} strokeWidth={1.500} /></NewTab>
        </Chrome>

        <AppArea>
          <TopBar>
            <Brand>
              <LoopMark />
              <BrandName><span>L</span><span>O</span><span>O</span><span>P</span></BrandName>
              <Activity aria-label="Activity"><Glyph name="user" size={20} /><Badge>21</Badge></Activity>
            </Brand>
            <Projects>
              <ProjectsLabel>PROJECTS:</ProjectsLabel>
              <InlineButton>Recent projects<ChevronDown size={10} /></InlineButton>
            </Projects>
            <TopTools>
              <Language><FlagIcon /><span>English<ChevronDown size={9} /></span></Language>
              <RedButton aria-label="Full screen"><FaExpandArrowsAlt size={17} /></RedButton>
              <Search>
                <input aria-label="Find reports" placeholder="Find reports and more" />
                <FaSearch size={16} />
              </Search>
              <RedButton aria-label="Sign out"><FaSignOutAlt /></RedButton>
              <RedButton aria-label="Menu"><FaBars size={17} /></RedButton>
            </TopTools>
          </TopBar>

          <Body>
            <Sidebar>
              <UserLink><Glyph name="user" size={16} /><UserName>Admin Admin<ChevronDown size={9} /></UserName></UserLink>
              <nav>
                {menuBefore.map((item) => <MenuRow key={item.label} item={item} />)}
                <MenuLink href="#" $active>
                  <Glyph name="cog" size={17} />
                  <span>Setting</span>
                  <ChevronDown size={13} />
                </MenuLink>
                <SubMenu>
                  {subItems.map((item, i) => (
                    <SubLink href="#" key={item.label} $active={i === 0}>{item.icon}{item.label}</SubLink>
                  ))}
                </SubMenu>
                {menuAfter.map((item) => <MenuRow key={item.label} item={item} />)}
              </nav>
            </Sidebar>

            <Main>
              <Ribbon>
                <RefreshButton aria-label="Refresh"><FaSyncAlt size={11} /></RefreshButton>
                <SettingsTab aria-label="Settings"><FaCogs transform="scale(-1 1)" /></SettingsTab>
              </Ribbon>
              <PageHead><Glyph name="cog" size={20} /></PageHead>
              <Panel>
                <PanelHead>
                  <Grip />
                  <GroupButton>Group<FaCaretDown size={11} /></GroupButton>
                  <PanelCell $wide><CheckBox type="checkbox" aria-label="Select" /></PanelCell>
                  <PanelCell><button aria-label="Options"><Glyph name="cog" size={14} /></button></PanelCell>
                  <PanelCell><button aria-label="Collapse"><FaMinus /></button></PanelCell>
                  <PanelCell><button aria-label="Expand"><FaExpandAlt /></button></PanelCell>
                  <PanelCell><button aria-label="Remove"><FaTimes /></button></PanelCell>
                </PanelHead>
                <PanelBody>
                  <LengthBar>
                    <LengthLabel>
                      Show
                      <SelectWrap>
                        <select defaultValue="10"><option>10</option></select>
                        <svg width="6" height="11" viewBox="0 0 6 11" fill="#444"><path d="M0 4.500L3 0l3 4.500zM0 6.500L3 11l3-4.500z" /></svg>
                      </SelectWrap>
                      entries
                    </LengthLabel>
                  </LengthBar>
                  <Table>
                    <thead>
                      <tr>
                        <th><ThInner><HeadText $tail={100}>No</HeadText><SortIcon /></ThInner></th>
                        <th><ThInner><HeadText $tail={19}>Action</HeadText><SortIcon /></ThInner></th>
                      </tr>
                    </thead>
                    <tbody>
                      {plates.map((p, i) => (
                        <tr key={i}>
                          <PlateCell $tail={p.tail}>{p.text}</PlateCell>
                          <ActionCell><EditButton aria-label="Edit"><FaPencilAlt /></EditButton></ActionCell>
                        </tr>
                      ))}
                    </tbody>
                  </Table>
                  <Pager>
                    {pages.map((p) => <PageButton key={p} $muted={p === "..."}>{p}</PageButton>)}
                  </Pager>
                </PanelBody>
              </Panel>
              <Footer>
                <div>Copyright © 2017 <CompanyLink href="#">LOOP</CompanyLink> Co., Ltd. All rights reserved. Designed by &nbsp;memi</div>
                <SealRow>
                  <Seal href="#">
                    <SealSide>
                      <svg width="19" height="22" viewBox="0 0 19 22" aria-hidden="true">
                        <path d="M9.500 0Q14 2.500 19 2.500V12Q18 18 9.500 22Q1 18 0 12V2.500Q5 2.500 9.500 0z" fill="#fff" />
                        <rect x="4.500" y="9" width="10" height="7" fill="#88cc10" />
                        <path d="M6.500 9V7a3 3 0 0 1 6 0v2" fill="none" stroke="#88cc10" strokeWidth="2" />
                        <path d="M9.500 11v3" stroke="#fff" strokeWidth="2" />
                      </svg>
                    </SealSide>
                    <SealText>
                      <SealName>GODADDY</SealName>
                      <SealLine>보안</SealLine>
                      <SealLine>클릭하여 확인하기</SealLine>
                    </SealText>
                  </Seal>
                  <svg width="9" height="8" viewBox="0 0 9 8" fill="none" stroke="#ddd" aria-hidden="true">
                    <path d="M1 1h3v2H1M4 5H1M5 1l2 2M8 0v5M4 7h4V5M2 3l3 3" />
                  </svg>
                </SealRow>
              </Footer>
            </Main>
          </Body>

          <Backdrop>
            <Dialog role="dialog" aria-label="Device information">
              <DialogHead>
                <DialogTitle>
                  Device : 1
                  <Mosaic cols={7} cell={10} height={18} rows={[["#e6e6e6", "#efefef", "#f4f4f4", "#ececec", "#f3f3f3", "#eaeaea", "#e8e8e8"], ["#dedede", "#d8d8d8", "#e2e2e2", "#dadada", "#e2e2e2", "#d6d6d6", "#e0e0e0"]]} />
                  6 information
                </DialogTitle>
                <CloseButton aria-label="Close"><FaTimes /></CloseButton>
              </DialogHead>
              <DialogBody>
                <Tabs role="tablist">
                  {tabs.map((t, i) => (
                    <Tab key={t} role="tab" $active={i === 3}>
                      {i > 0 && <Glyph name="cog" size={17} />}
                      {t}
                    </Tab>
                  ))}
                </Tabs>
                <Form>
                  <Cell $span={6}>
                    <CheckLabel>
                      <CheckBox type="checkbox" />
                      I agree with the send
                      <Mosaic cols={14} cell={10} height={16} rows={[["#d8d8d8", "#d2d2d2", "#d4d4d4", "#d8d8d8", "#d6d6d6", "#d4d4d4", "#e8e8e8", "#d6d6d6", "#dadada", "#d6d6d6", "#dcdcdc", "#d8d8d8", "#dcdcdc", "#f6f6f6"], ["#f2f2f2", "#eee", "#e4e4e4", "#e8e8e8", "#eee", "#f0f0f0", "#eaeaea", "#e8e8e8", "#f2f2f2", "#f8f8f8", "#f2f2f2", "#ececec", "#fafafa", "#f4f4f4"]]} />
                    </CheckLabel>
                  </Cell>
                  <Cell $span={6}>
                    <CheckLabel><CheckBox type="checkbox" />Notice Use</CheckLabel>
                  </Cell>
                  <Cell $span={4}>
                    <FieldLabel htmlFor="tel">Tel.</FieldLabel>
                    <TextInput id="tel" defaultValue="None" />
                  </Cell>
                  <Cell $span={8}>
                    <FieldLabel htmlFor="message">Message</FieldLabel>
                    <TextInput id="message" defaultValue="None" />
                  </Cell>
                  <Cell $span={4}>
                    <FieldLabel htmlFor="speed">Over Speed</FieldLabel>
                    <NumberBox>
                      <NumberIcon><FaLevelUpAlt /></NumberIcon>
                      <input id="speed" type="number" defaultValue={100} />
                      <Stepper type="button" aria-label="Step">
                        <svg width="9" height="17" viewBox="0 0 9 17" fill="none" stroke="#333" strokeWidth="1.300">
                          <path d="M2 6l2.500-2.500L7 6M2 11l2.500 2.500L7 11" />
                        </svg>
                      </Stepper>
                    </NumberBox>
                  </Cell>
                  <Cell $span={12}>
                    <FieldLabel as="div">Geofense</FieldLabel>
                    <MapBox>
                      <GeoMap />
                      <MapControls $place="type">
                        <MapButton type="button" $w={34} $h={29} $on>지도</MapButton>
                        <MapButton type="button" $w={36} $h={29} $rule="left">위성</MapButton>
                      </MapControls>
                      <MapControls $place="draw">
                        <MapButton type="button" $w={24} $h={24} aria-label="Pan"><HandIcon /></MapButton>
                        <MapButton type="button" $w={24} $h={24} $rule="left" aria-label="Draw polygon">
                          <svg width="14" height="12" viewBox="0 0 14 12" fill="#bbb" stroke="#777">
                            <path d="M.8.8L6 5.500 13 2.500 12 7.500 4 11.300z" />
                          </svg>
                        </MapButton>
                      </MapControls>
                      <MapControls $place="full">
                        <MapButton type="button" $w={25} $h={25} aria-label="Full screen map">
                          <svg width="15" height="15" viewBox="0 0 15 15" fill="none" stroke="#5a5a5a" strokeWidth="2">
                            <path d="M1 5V1h4M10 1h4v4M14 10v4h-4M5 14H1v-4" />
                          </svg>
                        </MapButton>
                      </MapControls>
                      <MapControls $place="pegman">
                        <MapButton type="button" $w={28} $h={28} aria-label="Street view"><Pegman /></MapButton>
                      </MapControls>
                      <MapControls $place="zoom">
                        <MapButton type="button" $w={28} $h={27} aria-label="Zoom in">
                          <svg width="11" height="11" viewBox="0 0 11 11" stroke="#565656" strokeWidth="3"><path d="M5.500 0v11M0 5.500h11" /></svg>
                        </MapButton>
                        <MapButton type="button" $w={28} $h={28} $rule="top" aria-label="Zoom out">
                          <svg width="11" height="11" viewBox="0 0 11 11" stroke="#565656" strokeWidth="3"><path d="M0 5.500h11" /></svg>
                        </MapButton>
                      </MapControls>
                      <GoogleMark href="#">
                        <Letter $color="#4285f4">G</Letter>
                        <Letter $color="#ea4335">o</Letter>
                        <Letter $color="#fbbc05">o</Letter>
                        <Letter $color="#4285f4">g</Letter>
                        <Letter $color="#34a853">l</Letter>
                        <Letter $color="#ea4335">e</Letter>
                      </GoogleMark>
                      <Attribution>
                        <span>지도 데이터 ©2017 GBRMPA, Google, ZENRIN</span>
                        <a href="#">이용약관</a>
                      </Attribution>
                    </MapBox>
                  </Cell>
                </Form>
              </DialogBody>
              <DialogFoot>
                <ActionButton $tone="plain">Cancel</ActionButton>
                <ActionButton $tone="gold">Modify</ActionButton>
                <ActionButton $tone="red">Delete</ActionButton>
              </DialogFoot>
            </Dialog>
          </Backdrop>
        </AppArea>
      </Window>
    </Desktop>
  );
}
